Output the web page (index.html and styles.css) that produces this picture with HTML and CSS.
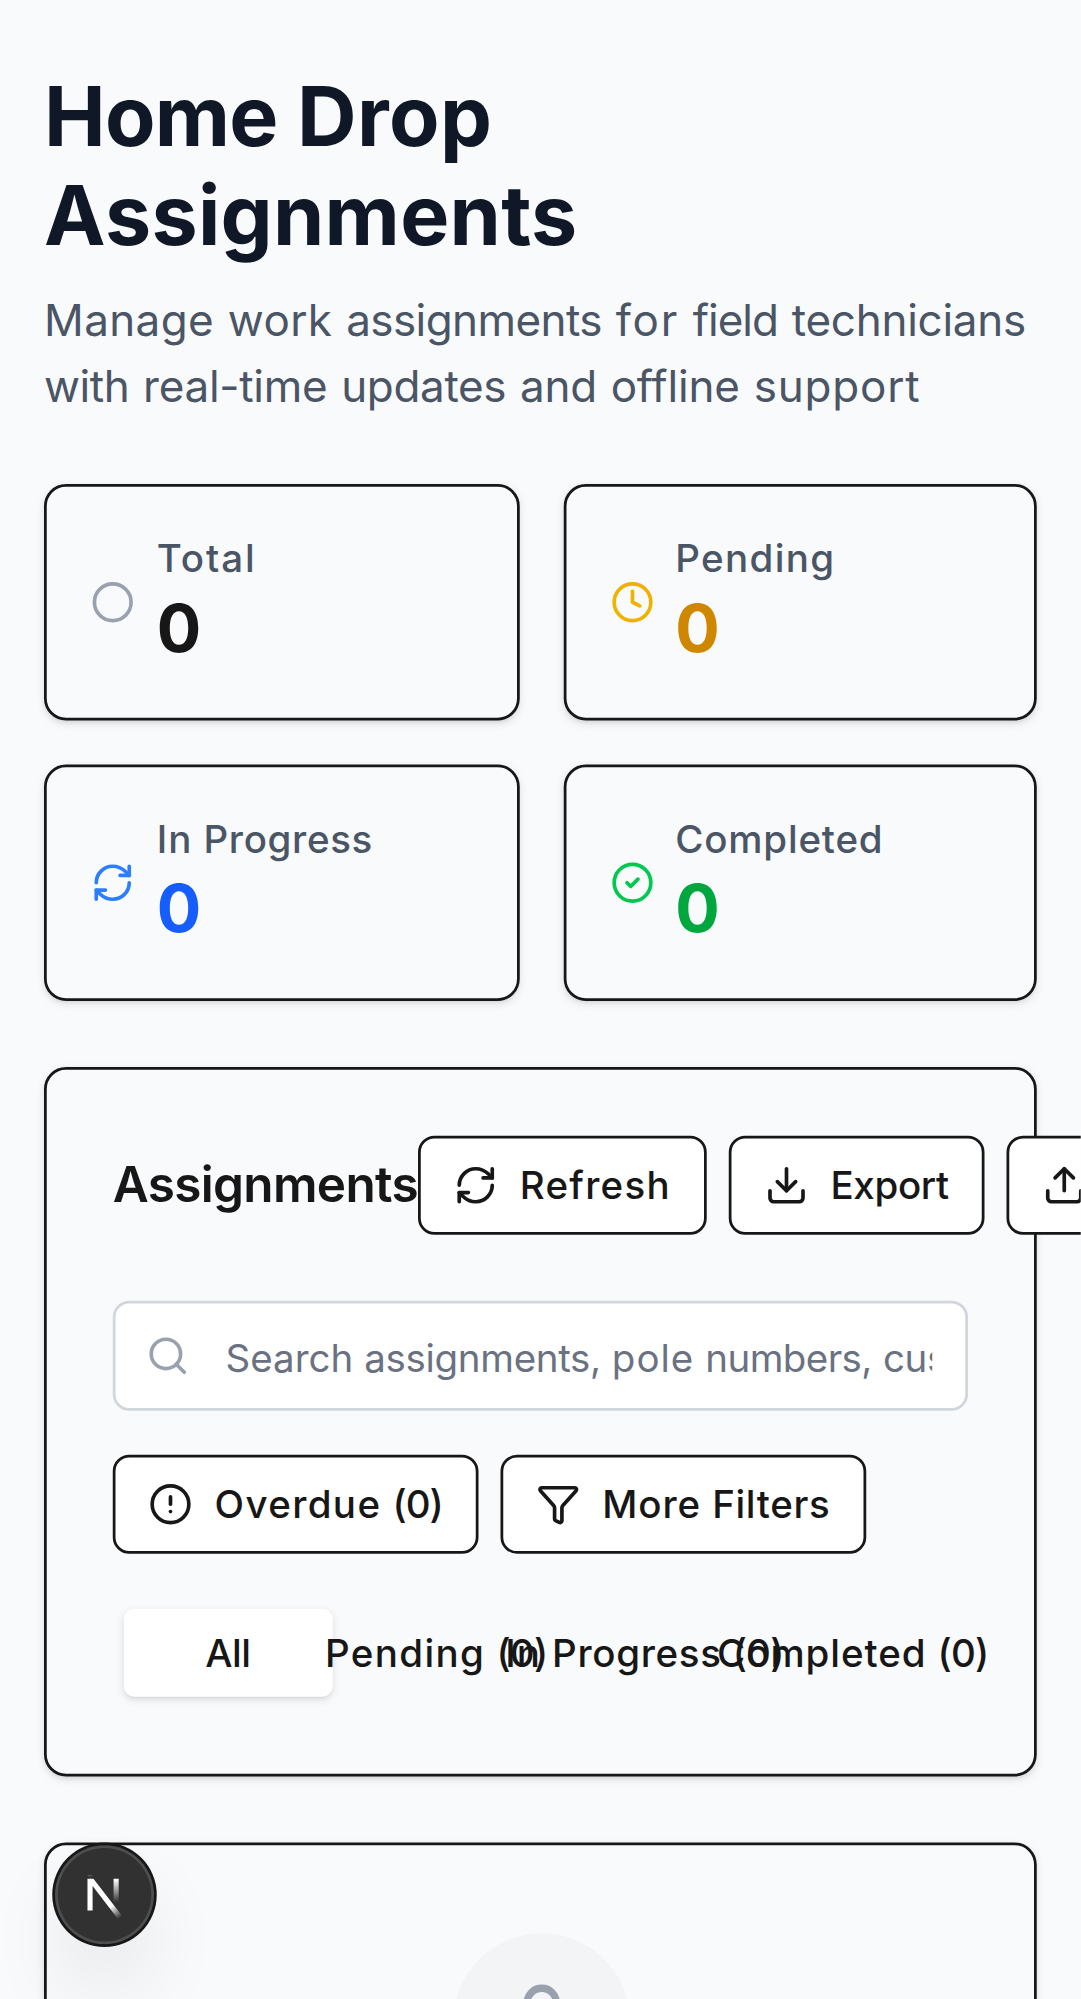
FILE: index.html
```html
<!DOCTYPE html>
<html lang="en">
<head>
<meta charset="utf-8">
<title>Home Drop Assignments</title>
<link rel="stylesheet" href="styles.css">
</head>
<body>
<div class="screen">
  <main class="page">
    <header>
      <h1 class="page-title"><span class="ls-n27">Home</span> <span class="ls-14">Drop</span> <span class="ls-10">Assignments</span></h1>
      <p class="page-subtitle"><span class="ls-14">Manage</span> <span class="ls-14">work</span> <span class="ls-n21">assignments</span> <span class="ls-64">for</span> <span class="ls-n36">field</span> <span class="ls-n10">technicians</span> <span class="ls-n16">with</span> <span class="ls-n10">real-time</span> <span class="ls-n12">updates</span> <span class="ls-n10">and</span> <span class="ls-n05">offline</span> <span class="ls-30">support</span></p>
    </header>

    <section class="stats">
      <div class="card stat">
        <svg class="icon icon-gray" viewBox="0 0 24 24"><circle cx="12" cy="12" r="10"/></svg>
        <div>
          <p class="stat-label"><span class="ls-70">Total</span></p>
          <p class="stat-value">0</p>
        </div>
      </div>
      <div class="card stat">
        <svg class="icon icon-yellow" viewBox="0 0 24 24"><circle cx="12" cy="12" r="10"/><polyline points="12 6 12 12 16 14"/></svg>
        <div>
          <p class="stat-label"><span class="ls-50">Pending</span></p>
          <p class="stat-value value-yellow">0</p>
        </div>
      </div>
      <div class="card stat">
        <svg class="icon icon-blue" viewBox="0 0 24 24"><path d="M3 12a9 9 0 0 1 9-9 9.75 9.75 0 0 1 6.74 2.74L21 8"/><path d="M21 3v5h-5"/><path d="M21 12a9 9 0 0 1-9 9 9.75 9.75 0 0 1-6.74-2.74L3 16"/><path d="M8 16H3v5"/></svg>
        <div>
          <p class="stat-label"><span class="ls-37">In</span> <span class="ls-24">Progress</span></p>
          <p class="stat-value value-blue">0</p>
        </div>
      </div>
      <div class="card stat">
        <svg class="icon icon-green" viewBox="0 0 24 24"><circle cx="12" cy="12" r="10"/><path d="m9 12 2 2 4-4"/></svg>
        <div>
          <p class="stat-label"><span class="ls-30">Completed</span></p>
          <p class="stat-value value-green">0</p>
        </div>
      </div>
    </section>

    <section class="card panel">
      <div class="panel-head">
        <h2 class="panel-title">Assignments</h2>
        <div class="button-row">
          <button class="button" type="button"><svg class="icon" viewBox="0 0 24 24"><path d="M3 12a9 9 0 0 1 9-9 9.75 9.75 0 0 1 6.74 2.74L21 8"/><path d="M21 3v5h-5"/><path d="M21 12a9 9 0 0 1-9 9 9.75 9.75 0 0 1-6.74-2.74L3 16"/><path d="M8 16H3v5"/></svg><span class="ls-46">Refresh</span></button>
          <button class="button" type="button"><svg class="icon" viewBox="0 0 24 24"><path d="M12 15V3"/><path d="M21 15v4a2 2 0 0 1-2 2H5a2 2 0 0 1-2-2v-4"/><path d="m7 10 5 5 5-5"/></svg><span class="ls-n12">Export</span></button>
          <button class="button" type="button"><svg class="icon" viewBox="0 0 24 24"><path d="M12 3v12"/><path d="m17 8-5-5-5 5"/><path d="M21 15v4a2 2 0 0 1-2 2H5a2 2 0 0 1-2-2v-4"/></svg><span class="ls-n12">Import</span></button>
        </div>
      </div>

      <div class="filters">
        <div class="search">
          <svg class="icon icon-gray" viewBox="0 0 24 24"><circle cx="11" cy="11" r="8"/><path d="m21 21-4.34-4.34"/></svg>
          <div class="search-text">Search <span class="ls-n12">assignments,</span> <span class="ls-37">pole</span> <span class="ls-n21">numbers,</span> <span class="ls-n12">customers...</span></div>
        </div>
        <div class="button-row">
          <button class="button" type="button"><svg class="icon" viewBox="0 0 24 24"><circle cx="12" cy="12" r="10"/><path d="M12 8v4"/><path d="M12 16h.01"/></svg><span><span class="ls-50">Overdue</span> <span class="ls-n36">(0)</span></span></button>
          <button class="button" type="button"><svg class="icon" viewBox="0 0 24 24"><path d="M10 20a1 1 0 0 0 .553.895l2 1A1 1 0 0 0 14 21v-7a2 2 0 0 1 .517-1.341L21.74 4.67A1 1 0 0 0 21 3H3a1 1 0 0 0-.742 1.67l7.225 7.989A2 2 0 0 1 10 14z"/></svg><span><span class="ls-34">More</span> <span class="ls-24">Filters</span></span></button>
        </div>
        <div class="tabs">
          <button class="tab tab-active" type="button"><span class="ls-n16">All</span></button>
          <button class="tab" type="button"><span><span class="ls-50">Pending</span> <span class="ls-n27">(0)</span></span></button>
          <button class="tab" type="button"><span><span class="ls-37">In</span> <span class="ls-24">Progress</span> <span class="ls-n27">(0)</span></span></button>
          <button class="tab" type="button"><span><span class="ls-34">Completed</span> <span class="ls-n27">(0)</span></span></button>
        </div>
      </div>
    </section>

    <section class="card empty">
      <div class="empty-badge">
        <svg class="icon icon-gray icon-large" viewBox="0 0 24 24"><path d="M19 21v-2a4 4 0 0 0-4-4H9a4 4 0 0 0-4 4v2"/><circle cx="12" cy="7" r="4"/></svg>
      </div>
    </section>
  </main>

  <div class="dev-badge">
    <svg class="dev-mark" viewBox="0 0 36 36" fill="none">
      <defs>
        <linearGradient id="diagonal" gradientUnits="userSpaceOnUse" x1="9.956" y1="11.123" x2="15.478" y2="17.967">
          <stop stop-color="#fff"/>
          <stop offset=".604" stop-color="#fff" stop-opacity="0"/>
          <stop offset="1" stop-color="#fff" stop-opacity="0"/>
        </linearGradient>
        <linearGradient id="stem" gradientUnits="userSpaceOnUse" x1="11.822" y1="1.4" x2="11.791" y2="9.625">
          <stop stop-color="#fff"/>
          <stop offset="1" stop-color="#fff" stop-opacity="0"/>
        </linearGradient>
        <clipPath id="cap"><rect x="0" y="1.1" width="18" height="18"/></clipPath>
      </defs>
      <g transform="translate(10.4 11.1)" stroke-width="1.86">
        <path clip-path="url(#cap)" d="M13.3 15.2 2.34 1v11.6" stroke="url(#diagonal)"/>
        <path d="M11.825 1.1v12" stroke="url(#stem)"/>
        <path d="M1.5 0h1.5" stroke="#fff" stroke-width=".4" stroke-opacity=".25"/>
      </g>
    </svg>
  </div>
</div>
</body>
</html>
```
FILE: styles.css
```css
*,
*::before,
*::after {
  box-sizing: border-box;
}

body {
  margin: 0;
  height: 1999px;
  overflow: hidden;
  background: #f9fafc;
}

h1, h2, p {
  margin: 0;
}

button {
  font: inherit;
  color: inherit;
}

/* 393 x 727 phone layout, enlarged to the window */
.screen {
  position: relative;
  width: 393px;
  height: 727px;
  overflow: hidden;
  transform: scale(2.75);
  transform-origin: 0 0;
  background: #f9fafc;
  color: #171717;
  font: 14px/20px Inter, "Liberation Sans", sans-serif;
}

.page {
  display: flex;
  flex-direction: column;
  gap: 24px;
  padding: 24px 16px;
}

.page-title {
  color: #101828;
  font-size: 30px;
  line-height: 36px;
  font-weight: 700;
  word-spacing: -.1px;
}

.page-subtitle {
  margin-top: 8px;
  color: #4a5565;
  font-size: 16px;
  line-height: 24px;
  word-spacing: .5px;
}

.card {
  border: 1px solid #171717;
  border-radius: 8px;
  box-shadow: 0 1px 3px rgba(0, 0, 0, .1), 0 1px 2px -1px rgba(0, 0, 0, .1);
  background: #f9fafc;
}

.icon {
  flex: none;
  width: 16px;
  height: 16px;
  fill: none;
  stroke: currentColor;
  stroke-width: 2;
  stroke-linecap: round;
  stroke-linejoin: round;
}

.icon-large {
  width: 32px;
  height: 32px;
}

.icon-gray { color: #99a1af; }
.icon-yellow { color: #f0b100; }
.icon-blue { color: #2b7fff; }
.icon-green { color: #00c950; }

.stats {
  display: grid;
  grid-template-columns: repeat(2, minmax(0, 1fr));
  gap: 16px;
}

.stat {
  display: flex;
  align-items: center;
  gap: 8px;
  padding: 16px;
}

.stat-label {
  color: #4a5565;
  font-weight: 500;
  word-spacing: .27px;
}

.stat-value {
  font-size: 24px;
  line-height: 32px;
  font-weight: 700;
}

.value-yellow { color: #d08700; }
.value-blue { color: #155dfc; }
.value-green { color: #00a63e; }

.panel {
  padding: 24px;
}

.panel-head {
  display: flex;
  align-items: center;
  justify-content: space-between;
}

.panel-title {
  font-size: 18px;
  line-height: 28px;
  font-weight: 600;
  letter-spacing: -.244px;
}

.button-row {
  display: flex;
  gap: 8px;
}

.button {
  display: inline-flex;
  flex: none;
  align-items: center;
  justify-content: center;
  gap: 8px;
  height: 36px;
  padding: 0 12px;
  border: 1px solid #171717;
  border-radius: 6px;
  background: #fff;
  font-weight: 500;
  white-space: nowrap;
  word-spacing: .27px;
}

.filters {
  display: flex;
  flex-direction: column;
  gap: 16px;
  margin-top: 24px;
}

.search {
  display: flex;
  align-items: center;
  gap: 13px;
  height: 40px;
  padding: 0 12px 0 11px;
  border: 1px solid #d1d5dc;
  border-radius: 6px;
  background: #fff;
}

.search-text {
  flex: 1;
  min-width: 0;
  margin-top: 2px;
  overflow: hidden;
  color: #6a7282;
  white-space: nowrap;
  word-spacing: .06px;
}

.tabs {
  display: grid;
  grid-template-columns: repeat(4, minmax(0, 1fr));
  height: 40px;
  padding: 4px;
}

.tab {
  display: flex;
  align-items: center;
  justify-content: center;
  padding: 6px 12px;
  border: 0;
  border-radius: 4px;
  background: transparent;
  font-weight: 500;
  white-space: nowrap;
  word-spacing: .27px;
}

.tab-active {
  background: #fff;
  box-shadow: 0 1px 3px rgba(0, 0, 0, .1), 0 1px 2px -1px rgba(0, 0, 0, .1);
}

.empty {
  display: flex;
  justify-content: center;
  height: 240px;
  padding: 32px;
}

.empty-badge {
  display: flex;
  align-items: center;
  justify-content: center;
  width: 64px;
  height: 64px;
  border-radius: 50%;
  background: #f3f4f6;
}

.dev-badge {
  position: absolute;
  left: 20px;
  bottom: 20px;
  width: 36px;
  height: 36px;
  border-radius: 50%;
  background: #313131;
  box-shadow: 0 0 0 1px #171717, inset 0 0 0 1px rgba(255, 255, 255, .14), 0 16px 32px -8px rgba(0, 0, 0, .24);
}

.dev-mark {
  display: block;
  width: 36px;
  height: 36px;
}

/* Letter spacing steps, in hundredths of a pixel (n = negative) */
.ls-n36 { letter-spacing: -.36px; }
.ls-n27 { letter-spacing: -.27px; }
.ls-n21 { letter-spacing: -.21px; }
.ls-n16 { letter-spacing: -.16px; }
.ls-n12 { letter-spacing: -.12px; }
.ls-n10 { letter-spacing: -.1px; }
.ls-n05 { letter-spacing: -.05px; }
.ls-10 { letter-spacing: .1px; }
.ls-14 { letter-spacing: .14px; }
.ls-24 { letter-spacing: .24px; }
.ls-30 { letter-spacing: .3px; }
.ls-34 { letter-spacing: .34px; }
.ls-37 { letter-spacing: .37px; }
.ls-46 { letter-spacing: .46px; }
.ls-50 { letter-spacing: .5px; }
.ls-64 { letter-spacing: .64px; }
.ls-70 { letter-spacing: .7px; }
```
